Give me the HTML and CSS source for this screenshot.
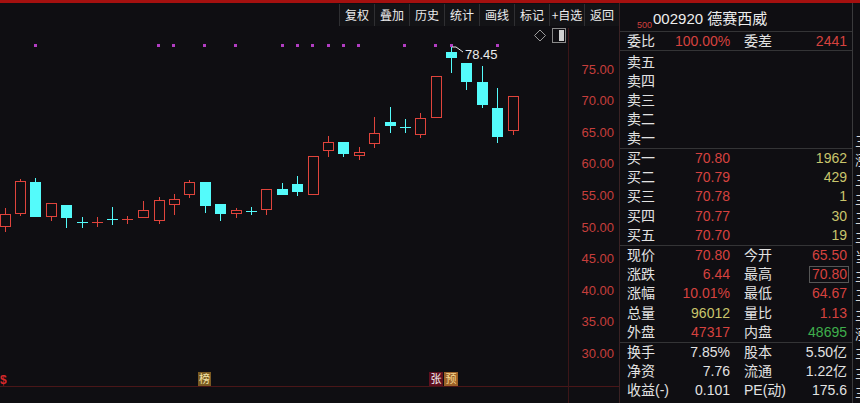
FILE: index.html
```html
<!DOCTYPE html>
<html lang="zh-CN">
<head>
<meta charset="utf-8">
<title>德赛西威 002920</title>
<link rel="stylesheet" href="styles.css">
</head>
<body>
<div class="app">
  <div class="redbar"></div>
  <div class="main">
    <div class="left">
      <div class="toolbar">
        <span class="tb">复权</span><span class="tb">叠加</span><span class="tb">历史</span><span class="tb">统计</span><span class="tb">画线</span><span class="tb">标记</span><span class="tb">+自选</span><span class="tb">返回</span>
      </div>
      <div class="chartbody">
        <svg class="plot" width="568" height="375" viewBox="0 28 568 375" shape-rendering="crispEdges">
          <g class="dots" fill="#b23dc2">
            <rect x="34" y="44" width="3" height="3"/><rect x="157" y="44" width="3" height="3"/><rect x="172" y="44" width="3" height="3"/><rect x="203" y="44" width="3" height="3"/><rect x="234" y="44" width="3" height="3"/><rect x="281" y="44" width="3" height="3"/><rect x="296" y="44" width="3" height="3"/><rect x="311" y="44" width="3" height="3"/><rect x="327" y="44" width="3" height="3"/><rect x="342" y="44" width="3" height="3"/><rect x="357" y="44" width="3" height="3"/><rect x="403" y="44" width="3" height="3"/><rect x="434" y="44" width="3" height="3"/><rect x="450" y="44" width="3" height="3"/><rect x="496" y="44" width="3" height="3"/>
          </g>
          <g class="icons">
            <path d="M540 30 L545.5 35.5 L540 41 L534.5 35.5 Z" fill="none" stroke="#9a9a9a" stroke-width="1" shape-rendering="auto"/>
            <rect x="552.5" y="28.5" width="13" height="14" fill="none" stroke="#8a8a8a"/>
            <rect x="559" y="30" width="5" height="11" fill="#d0d0d0"/>
          </g>
          <g class="up" fill="none" stroke="#e0443c" stroke-width="1">
            <rect x="0.5" y="214.5" width="10" height="12"/><path d="M5.5 208V214M5.5 227V232"/>
            <rect x="15.5" y="181.5" width="10" height="32"/><path d="M20.5 179V181M20.5 214V216"/>
            <rect x="46.5" y="203.5" width="10" height="13"/><path d="M51.5 217V221"/>
            <path d="M92 222.5H103M97.5 217V227"/>
            <path d="M122 219.5H133M127.5 216V224"/>
            <rect x="138.5" y="210.5" width="10" height="7"/><path d="M143.5 201V210"/>
            <rect x="154.5" y="200.5" width="10" height="20"/><path d="M159.5 197V200M159.5 221V224"/>
            <rect x="169.5" y="199.5" width="10" height="5"/><path d="M174.5 194V199M174.5 205V215"/>
            <rect x="184.5" y="182.5" width="10" height="12"/><path d="M189.5 180V182M189.5 195V198"/>
            <rect x="231.5" y="210.5" width="10" height="3"/><path d="M236.5 208V210M236.5 214V218"/>
            <rect x="261.5" y="189.5" width="10" height="20"/><path d="M266.5 210V215"/>
            <rect x="308.5" y="156.5" width="10" height="38"/>
            <rect x="323.5" y="142.5" width="10" height="8"/><path d="M328.5 136V142M328.5 151V157"/>
            <rect x="354.5" y="152.5" width="10" height="3"/><path d="M359.5 147V152M359.5 156V160"/>
            <rect x="369.5" y="133.5" width="10" height="10"/><path d="M374.5 117V133M374.5 144V148"/>
            <rect x="415.5" y="118.5" width="10" height="16"/><path d="M420.5 113V118M420.5 135V138"/>
            <rect x="431.5" y="76.5" width="10" height="41"/>
            <rect x="508.5" y="96.5" width="10" height="34"/><path d="M513.5 131V135"/>
          </g>
          <g class="down" fill="#54fbfb" stroke="none">
            <rect x="30" y="182" width="11" height="35"/><rect x="35" y="178" width="1" height="4"/>
            <rect x="61" y="205" width="11" height="13"/><rect x="66" y="218" width="1" height="10"/>
            <rect x="77" y="222" width="11" height="1"/><rect x="82" y="217" width="1" height="11"/>
            <rect x="107" y="219" width="11" height="1"/><rect x="112" y="207" width="1" height="18"/>
            <rect x="200" y="182" width="11" height="24"/><rect x="205" y="206" width="1" height="7"/>
            <rect x="215" y="204" width="11" height="10"/><rect x="220" y="214" width="1" height="7"/>
            <rect x="246" y="211" width="11" height="1"/><rect x="251" y="207" width="1" height="8"/>
            <rect x="277" y="189" width="11" height="6"/><rect x="282" y="183" width="1" height="6"/>
            <rect x="292" y="184" width="11" height="8"/><rect x="297" y="176" width="1" height="20"/>
            <rect x="338" y="142" width="11" height="12"/><rect x="343" y="154" width="1" height="3"/>
            <rect x="385" y="122" width="11" height="4"/><rect x="390" y="107" width="1" height="26"/>
            <rect x="400" y="127" width="11" height="1"/><rect x="405" y="119" width="1" height="14"/>
            <rect x="446" y="52" width="11" height="6"/><rect x="451" y="47" width="1" height="26"/>
            <rect x="461" y="63" width="11" height="19"/><rect x="466" y="82" width="1" height="8"/>
            <rect x="477" y="82" width="11" height="23"/><rect x="482" y="66" width="1" height="42"/>
            <rect x="492" y="108" width="11" height="29"/><rect x="497" y="88" width="1" height="55"/>
          </g>
          <polyline points="452,47 456,47 463,52" fill="none" stroke="#e8e8e8" stroke-width="1" shape-rendering="auto"/>
          <text x="465" y="59" class="hi">78.45</text>
          <rect x="0" y="386" width="568" height="1" fill="#4a1618"/>
          <text x="0" y="384" class="dollar">$</text>
          <rect x="198" y="372" width="13" height="14" fill="#7a5a22"/>
          <text x="204.5" y="383" class="badge" fill="#f2e2a6">榜</text>
          <rect x="429" y="372" width="14" height="14" fill="#5e0f1e"/>
          <text x="436" y="383" class="badge" fill="#f4f4f4">张</text>
          <rect x="444" y="372" width="14" height="14" fill="#9c6128"/>
          <text x="451" y="383" class="badge" fill="#f6d890">预</text>
        </svg>
        <div class="axis">
          <div class="ticks">
            <span>75.00</span><span>70.00</span><span>65.00</span><span>60.00</span><span>55.00</span><span>50.00</span><span>45.00</span><span>40.00</span><span>35.00</span><span>30.00</span>
          </div>
          <div class="axis-line"></div>
        </div>
      </div>
    </div>

    <div class="panel">
      <div class="ptitle"><span class="p500">500</span><span class="pname">002920 德赛西威</span></div>
      <div class="row wb"><span class="lab">委比</span><span class="v r">100.00%</span><span class="lab2">委差</span><span class="v r">2441</span></div>
      <div class="block sell">
        <div class="row"><span class="lab">卖五</span></div>
        <div class="row"><span class="lab">卖四</span></div>
        <div class="row"><span class="lab">卖三</span></div>
        <div class="row"><span class="lab">卖二</span></div>
        <div class="row"><span class="lab">卖一</span></div>
      </div>
      <div class="block buy">
        <div class="row"><span class="lab">买一</span><span class="v r">70.80</span><span class="vol y">1962</span></div>
        <div class="row"><span class="lab">买二</span><span class="v r">70.79</span><span class="vol y">429</span></div>
        <div class="row"><span class="lab">买三</span><span class="v r">70.78</span><span class="vol y">1</span></div>
        <div class="row"><span class="lab">买四</span><span class="v r">70.77</span><span class="vol y">30</span></div>
        <div class="row"><span class="lab">买五</span><span class="v r">70.70</span><span class="vol y">19</span></div>
      </div>
      <div class="block stats">
        <div class="row"><span class="lab">现价</span><span class="v r">70.80</span><span class="lab2">今开</span><span class="v r">65.50</span></div>
        <div class="row"><span class="lab">涨跌</span><span class="v r">6.44</span><span class="lab2">最高</span><span class="v r"><span class="boxed">70.80</span></span></div>
        <div class="row"><span class="lab">涨幅</span><span class="v r">10.01%</span><span class="lab2">最低</span><span class="v r">64.67</span></div>
        <div class="row"><span class="lab">总量</span><span class="v y">96012</span><span class="lab2">量比</span><span class="v r">1.13</span></div>
        <div class="row"><span class="lab">外盘</span><span class="v r">47317</span><span class="lab2">内盘</span><span class="v g">48695</span></div>
      </div>
      <div class="block last">
        <div class="row"><span class="lab">换手</span><span class="v">7.85%</span><span class="lab2">股本</span><span class="v">5.50亿</span></div>
        <div class="row"><span class="lab">净资</span><span class="v">7.76</span><span class="lab2">流通</span><span class="v">1.22亿</span></div>
        <div class="row"><span class="lab">收益(-)</span><span class="v">0.101</span><span class="lab2">PE(动)</span><span class="v">175.6</span></div>
      </div>
    </div>

    <div class="edge">
      <span>三</span><span>涨</span><span>三</span><span>主</span><span>三</span><span>主</span><span>当</span><span>主</span><span>三</span><span>主</span><span>涨</span><span>主</span><span>主</span><span>主</span>
    </div>
  </div>
</div>
</body>
</html>
```

FILE: styles.css
```css
* { box-sizing: border-box; margin: 0; padding: 0; }

html, body {
  width: 860px;
  height: 403px;
  overflow: hidden;
  background: #0f0e12;
}

body {
  font-family: "Liberation Sans", "Noto Sans CJK SC", sans-serif;
  color: #e2e2e2;
}

.app {
  display: flex;
  flex-direction: column;
  height: 403px;
}

.redbar {
  flex: none;
  height: 3px;
  background: #a4100f;
}

.main {
  flex: 1;
  display: flex;
  min-height: 0;
}

/* ---------- left: toolbar + chart ---------- */
.left {
  flex: none;
  width: 620px;
  display: flex;
  flex-direction: column;
  border-right: 1px solid #3a2224;
}

.toolbar {
  flex: none;
  height: 25px;
  display: flex;
  justify-content: flex-end;
  align-items: flex-start;
  padding-top: 1px;
}

.tb {
  width: 35px;
  height: 22px;
  border-left: 1px solid #2f2f32;
  background: #131316;
  font-family: "Noto Sans CJK SC", sans-serif;
  font-size: 12px;
  line-height: 22px;
  text-align: center;
  color: #ececec;
}

.chartbody {
  flex: 1;
  display: flex;
}

.plot {
  display: block;
  flex: none;
}

.plot .hi {
  font-family: "Liberation Sans", sans-serif;
  font-size: 13px;
  fill: #ececec;
}

.plot .dollar {
  font-family: "Liberation Sans", sans-serif;
  font-size: 12px;
  font-weight: bold;
  fill: #d8282a;
}

.plot .badge {
  font-family: "Noto Sans CJK SC", sans-serif;
  font-size: 11px;
  text-anchor: middle;
}

.axis {
  flex: none;
  width: 51px;
  display: flex;
  flex-direction: column;
  border-left: 1px solid #3c1618;
}

.ticks {
  height: 358px;
  padding-top: 25.6px;
  padding-right: 5px;
  text-align: right;
  font-size: 13px;
  color: #c63e3c;
}

.ticks span {
  display: block;
  height: 31.6px;
  line-height: 31.6px;
}

.axis-line {
  height: 1px;
  background: #4a1618;
}

/* ---------- right: quote panel ---------- */
.panel {
  flex: none;
  width: 232px;
  display: flex;
  flex-direction: column;
  font-size: 14px;
}

.ptitle {
  height: 29px;
  border-bottom: 1px solid #343436;
  display: flex;
  align-items: flex-start;
  padding: 7px 0 0 17px;
}

.p500 {
  font-size: 9px;
  line-height: 10px;
  margin-top: 10px;
  color: #d0403e;
}

.pname {
  font-size: 15px;
  line-height: 18px;
  margin-left: 1px;
  color: #ededed;
}

.row {
  display: grid;
  grid-template-columns: 48px 55px 60px 57px;
  padding: 0 5px 0 7px;
  height: 19.2px;
  line-height: 19.2px;
  white-space: nowrap;
}

.row.wb {
  height: 19px;
  line-height: 18px;
  border-bottom: 1px solid #343436;
}

.block {
  border-bottom: 1px solid #343436;
}

.block.sell {
  padding-top: 2px;
}

.block.sell .row {
  height: 19px;
  line-height: 19px;
}

.block.last {
  border-bottom: none;
}

.lab, .lab2 {
  color: #e2e2e2;
}

.lab2 {
  padding-left: 14px;
}

.v {
  text-align: right;
  color: #e2e2e2;
}

.vol {
  grid-column: 3 / 5;
  text-align: right;
}

.r { color: #d6423f; }
.y { color: #c9c56c; }
.g { color: #3fae4c; }

.boxed {
  display: inline-block;
  border: 1px solid #565656;
  line-height: 15px;
  padding: 0 1px 0 2px;
  margin-right: -2px;
}

/* ---------- far-right clipped column ---------- */
.edge {
  flex: none;
  width: 8px;
  border-left: 1px solid #3a3a3c;
  overflow: hidden;
  display: flex;
  flex-direction: column;
  padding: 128px 0 0 2px;
  font-family: "Noto Sans CJK SC", sans-serif;
  font-size: 14px;
  color: #d8d8d8;
}

.edge span {
  display: block;
  height: 19.3px;
  line-height: 19.3px;
  white-space: nowrap;
}
```
